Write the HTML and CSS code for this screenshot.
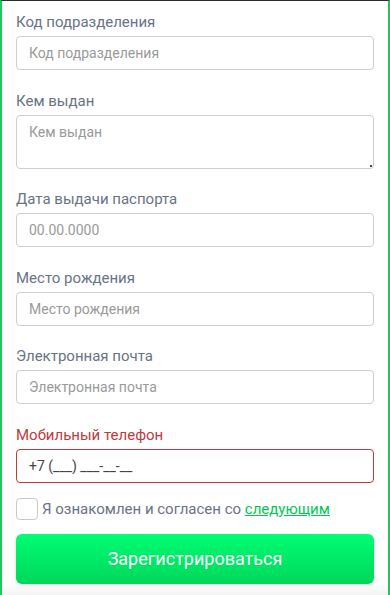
FILE: index.html
```html
<!DOCTYPE html>
<html lang="ru">
<head>
<meta charset="utf-8">
<link rel="stylesheet" href="styles.css">
</head>
<body>
<div class="frame">
  <form class="form">
    <div class="field">
      <label class="label">Код подразделения</label>
      <input class="input" type="text" placeholder="Код подразделения">
    </div>
    <div class="field">
      <label class="label">Кем выдан</label>
      <div class="textarea-wrap">
        <textarea class="input textarea" placeholder="Кем выдан"></textarea>
        <span class="grip"></span>
      </div>
    </div>
    <div class="field">
      <label class="label">Дата выдачи паспорта</label>
      <input class="input" type="text" placeholder="00.00.0000">
    </div>
    <div class="field">
      <label class="label">Место рождения</label>
      <input class="input" type="text" placeholder="Место рождения">
    </div>
    <div class="field">
      <label class="label">Электронная почта</label>
      <input class="input" type="text" placeholder="Электронная почта">
    </div>
    <div class="field field-error">
      <label class="label">Мобильный телефон</label>
      <input class="input input-error" type="text" value="+7 (___) ___-__-__">
    </div>
    <div class="agree">
      <span class="checkbox"></span>
      <span class="agree-text">Я ознакомлен и согласен со <a class="link" href="#">следующим</a></span>
    </div>
    <div class="footer">
      <button class="btn" type="button">Зарегистрироваться</button>
    </div>
  </form>
</div>
</body>
</html>
```
FILE: styles.css
```css
html, body {
  margin: 0;
  padding: 0;
  background: #ffffff;
}
body {
  font-family: Roboto, "Liberation Sans", Arial, sans-serif;
  width: 390px;
  height: 595px;
  overflow: hidden;
}
.frame {
  box-sizing: border-box;
  width: 390px;
  height: 595px;
  border-top: 1px solid #2b2b2b;
  border-left: 2px solid #1ec85a;
  border-right: 2px solid #1ec85a;
  overflow: hidden;
}
.form {
  padding: 10px 14px 0 14px;
  display: flex;
  flex-direction: column;
}
.field {
  display: flex;
  flex-direction: column;
  margin-bottom: 19.5px;
}
.label {
  font-size: 15px;
  line-height: 22px;
  color: #697386;
  margin-bottom: 3px;
}
.input {
  box-sizing: border-box;
  width: 100%;
  height: 34px;
  border: 1px solid #cfcfcf;
  border-radius: 4px;
  padding: 0 12px;
  font-family: Roboto, "Liberation Sans", Arial, sans-serif;
  font-size: 14px;
  color: #333;
  background: #fff;
  outline: none;
}
.input::placeholder {
  color: #9a9a9a;
}
.textarea-wrap {
  position: relative;
}
.textarea {
  height: 54px;
  padding-top: 8px;
  resize: none;
  display: block;
}
.grip {
  position: absolute;
  right: 2px;
  bottom: 2px;
  width: 2px;
  height: 2px;
  background: #444;
}
.field-error .label {
  color: #c0393b;
}
.input-error {
  border-color: #c0393b;
  color: #444;
}
.field-error {
  margin-bottom: 15px;
}
.agree {
  display: flex;
  align-items: center;
  gap: 4px;
  height: 22px;
}
.checkbox {
  box-sizing: border-box;
  width: 22px;
  height: 22px;
  border: 1px solid #c8c8c8;
  border-radius: 4px;
  background: #fff;
  flex: none;
}
.agree-text {
  font-size: 15px;
  color: #697386;
  white-space: nowrap;
}
.link {
  color: #00c853;
  text-decoration: underline;
}
.footer {
  margin: 14px -14px 0 -14px;
  padding: 0 14px 12px 14px;
  background: linear-gradient(to bottom, #ffffff 0%, #ffffff 80%, #f2f2f2 100%);
}
.btn {
  display: block;
  width: 100%;
  height: 50px;
  border: none;
  border-radius: 6px;
  background: linear-gradient(to bottom, #00fd74 0%, #00d75b 100%);
  color: #ffffff;
  font-family: Roboto, "Liberation Sans", Arial, sans-serif;
  font-size: 18px;
  box-shadow: 0 1px 4px rgba(0, 0, 0, 0.12);
  cursor: pointer;
}
```
